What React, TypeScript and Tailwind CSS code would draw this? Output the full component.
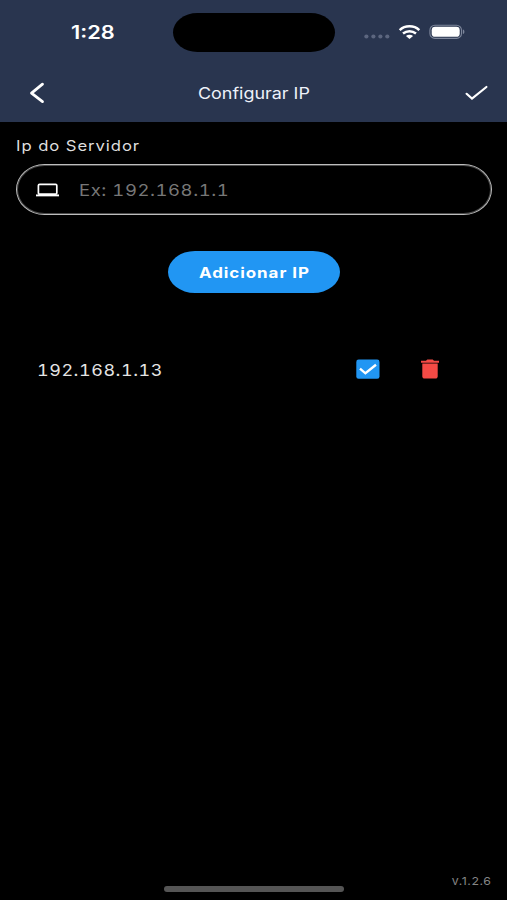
import React, { useState } from 'react';

const StatusBar: React.FC = () => (
  <div className="flex h-16 items-center">
    <div className="w-[173px] pt-px pl-[71px]">
      <span className="inline-block origin-left scale-x-[1.21] text-[18px] leading-[26px] font-semibold">1:28</span>
    </div>
    <div className="h-[39px] w-[162px] rounded-[25px/20px] bg-black" />
    <div className="flex flex-1 items-center pl-[29px]">
      <svg className="mt-[9px] h-[5px] w-[26px]" viewBox="0 0 26 5" fill="#5c667f">
        <circle cx="2.4" cy="2.5" r="2.1" />
        <circle cx="9.4" cy="2.5" r="2.1" />
        <circle cx="16.4" cy="2.5" r="2.1" />
        <circle cx="23.3" cy="2.5" r="2.1" />
      </svg>
      <svg className="ml-2 h-[14px] w-[23px]" viewBox="0 0 23 14" fill="none" stroke="white" strokeWidth="2.5">
        <path d="M1.7 5.1C7 .1 16 .1 21.3 5.1" />
        <path d="M5 8.5c3.8-3.1 9.2-3.1 13 0" />
        <path d="M7.9 10.9c2.1-1.7 5.1-1.7 7.2 0L11.5 14z" fill="white" stroke="none" />
      </svg>
      <svg className="ml-2 h-4 w-9" viewBox="0 0 36 16" fill="none">
        <rect x=".9" y="1.2" width="31.6" height="13.2" rx="5" stroke="#7d869b" strokeWidth="1.1" />
        <rect x="2.7" y="2.8" width="28" height="10" rx="3.4" fill="white" />
        <path d="M33.9 5.6c2 .5 2 4 0 4.5z" fill="#7d869b" />
      </svg>
    </div>
  </div>
);

const App: React.FC = () => {
  const [ip, setIp] = useState('');
  const [selected, setSelected] = useState(true);

  return (
    <div className="flex h-[900px] w-[507px] flex-col overflow-hidden bg-black font-['Inter','Liberation_Sans',sans-serif] text-white">
      <header className="h-[122px] bg-[#29354f]">
        <StatusBar />
        <div className="flex h-[58px] items-center justify-between pr-[18px] pl-[29px]">
          <button aria-label="Voltar">
            <svg className="h-[22px] w-4" viewBox="0 0 16 22" fill="none" stroke="white" strokeWidth="2.8" strokeLinecap="round" strokeLinejoin="round">
              <path d="M13.5 2.2 2.5 11.2l11 8.4" />
            </svg>
          </button>
          <h1 className="w-[112px] pr-[3px] text-center text-[16px] leading-6 whitespace-nowrap text-[#eef2fa]">
            <span className="inline-block scale-x-[1.12]">Configurar IP</span>
          </h1>
          <button aria-label="Salvar">
            <svg className="h-4 w-6" viewBox="0 0 24 16" fill="none" stroke="white" strokeWidth="2.2" strokeLinecap="round">
              <path d="M1.6 8.8 7 13.6 21.4 2" />
            </svg>
          </button>
        </div>
      </header>

      <main className="flex flex-1 flex-col px-4">
        <label className="mt-[14px] h-5 text-[14.5px] leading-5 text-[#dedede]">
          <span className="inline-block origin-left scale-x-[1.15] tracking-[0.8px]">Ip do Servidor</span>
        </label>
        <div className="mt-2 flex h-[51px] w-[476px] items-center rounded-[29px/26px] border border-[#bdbdbd] pl-[19px] shadow-[inset_0_0_0_1px_#4a4a4a]">
          <svg className="h-[14px] w-6" viewBox="0 0 24 14" fill="none">
            <rect x="2.4" y="1.4" width="18.4" height="9.8" rx="1.2" stroke="white" strokeWidth="1.7" />
            <path d="M0 12.4h23" stroke="white" strokeWidth="1.9" />
          </svg>
          <input
            className="ml-[19px] w-[320px] origin-left scale-x-[1.12] bg-transparent text-[16.5px] leading-6 tracking-[0.5px] tabular-nums outline-none placeholder:text-[#777777]"
            placeholder="Ex: 192.168.1.1"
            value={ip}
            onChange={(e) => setIp(e.target.value)}
          />
        </div>

        <button className="mt-9 ml-[152px] h-[42px] w-[172px] rounded-[27px/21px] bg-[#2196f3] text-[14.5px] font-bold whitespace-nowrap">
          <span className="inline-block scale-x-[1.17] pt-px tracking-[0.8px]">Adicionar IP</span>
        </button>

        {/* Saved servers */}
        <div className="mt-[60px] flex h-8 items-center pl-[21px]">
          <span className="w-[319px] pt-0.5 text-[16.5px] leading-6 text-[#e4e4e4]">
            <span className="inline-block origin-left scale-x-[1.09] tracking-[0.5px] tabular-nums">192.168.1.13</span>
          </span>
          <button aria-label="Selecionar" onClick={() => setSelected(!selected)}>
            <svg className="h-5 w-6" viewBox="0 0 24 20" fill="none">
              <rect x=".3" y=".6" width="23.2" height="19.2" rx="2.3" fill="#2196f3" />
              {selected && <path d="M4 9.6 9.4 14.3 20 5.8" stroke="white" strokeWidth="2.4" />}
            </svg>
          </button>
          <button aria-label="Remover" className="ml-10">
            <svg className="h-5 w-5" viewBox="0 0 20 20" fill="#f44a45">
              <path d="M1 1.7h5L7.3.5h5.4L14 1.7h5v2H1z" />
              <path d="M2.3 4.6h15.4v12.9c0 1.2-1 2.1-2.3 2.1H4.6c-1.3 0-2.3-.9-2.3-2.1z" />
            </svg>
          </button>
        </div>
      </main>

      <footer className="flex h-8 flex-col">
        <div className="h-[18px] pr-4 text-right text-[11px] leading-[26px] text-[#858585]">
          <span className="inline-block origin-right scale-x-[1.12] tracking-[0.5px]">v.1.2.6</span>
        </div>
        <div className="ml-[164px] h-[6px] w-[180px] rounded-full bg-[#555555]" />
      </footer>
    </div>
  );
};

export default App;
